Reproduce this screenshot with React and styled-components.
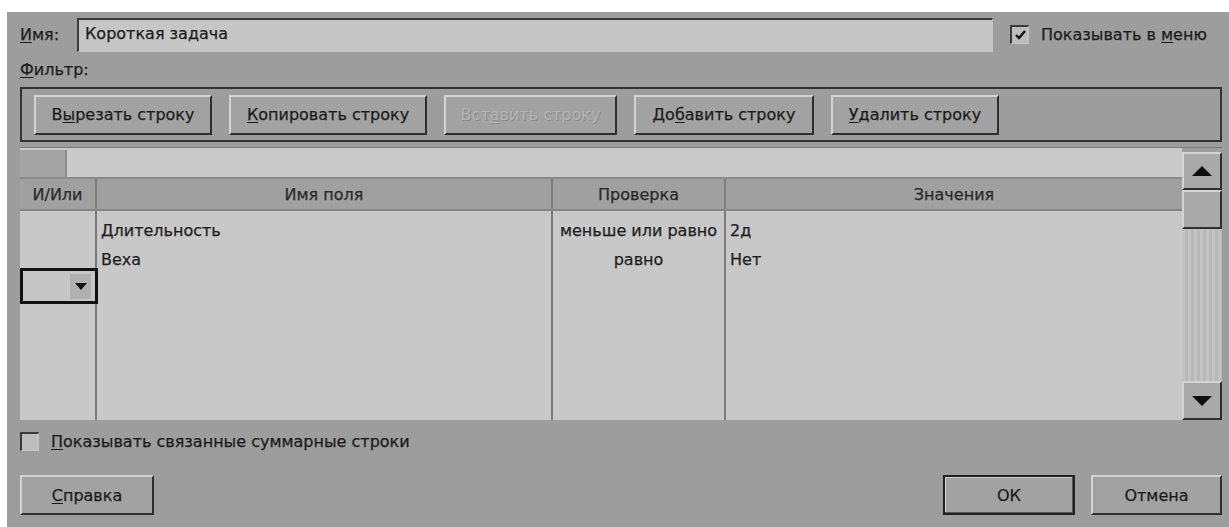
import React from 'react'
import styled, { createGlobalStyle, css } from 'styled-components'

const GlobalStyle = createGlobalStyle`
  html, body {
    margin: 0;
    padding: 0;
    background: #ffffff;
  }
  body {
    font-family: "DejaVu Sans", "Liberation Sans", sans-serif;
    font-size: 16px;
    color: #1c1c1c;
    -webkit-text-stroke: 0.25px currentColor;
  }
`

const raised = css`
  border-top: 2px solid #d4d4d4;
  border-left: 2px solid #d4d4d4;
  border-right: 2px solid #2e2e2e;
  border-bottom: 2px solid #2e2e2e;
`

const sunken = css`
  border-top: 2px solid #3a3a3a;
  border-left: 2px solid #3a3a3a;
  border-right: 1px solid #c4c4c4;
  border-bottom: 1px solid #c4c4c4;
`

const Dialog = styled.div`
  margin: 12px 0 0 7px;
  width: 1222px;
  height: 515px;
  box-sizing: border-box;
  background: #9d9d9d;
  padding: 5px 7px 0 13px;
  display: flex;
  flex-direction: column;
`

const NameRow = styled.div`
  display: flex;
  align-items: center;
  height: 35px;
`

const Label = styled.span`
  white-space: nowrap;
  color: #1e1e1e;
  width: ${p => p.$width || 'auto'};
  flex-shrink: 0;
`

const Key = styled.u`
  text-decoration-thickness: 1px;
  text-underline-offset: 2px;
`

const NameInput = styled.div`
  ${sunken};
  width: 916px;
  height: 34px;
  box-sizing: border-box;
  background: #c6c6c6;
  padding: 3px 0 0 6px;
  line-height: 22px;
`

const CheckLine = styled.label`
  display: flex;
  align-items: center;
  gap: 12px;
  margin-left: ${p => p.$offset || 0}px;
  white-space: nowrap;
`

const Box = styled.span`
  ${sunken};
  width: 19px;
  height: 19px;
  box-sizing: border-box;
  background: #bdbdbd;
  display: flex;
  align-items: center;
  justify-content: center;
  -webkit-text-stroke: 0;
`

const FilterLabel = styled.div`
  height: 20px;
  margin: 8px 0 7px;
  line-height: 20px;
`

const Toolbar = styled.div`
  border: 2px solid #333333;
  height: 55px;
  box-sizing: border-box;
  display: flex;
  align-items: center;
  gap: 17px;
  padding: 0 0 0 12px;
`

const Button = styled.div`
  ${raised};
  background: #a2a2a2;
  height: 40px;
  box-sizing: border-box;
  display: flex;
  align-items: center;
  justify-content: center;
  width: ${p => p.$width}px;
  white-space: nowrap;
  color: ${p => (p.$disabled ? '#b4b4b4' : '#1c1c1c')};
  ${p => p.$disabled && css`
    text-shadow: 1px 1px 0 #8a8a8a;
    -webkit-text-stroke: 0;
  `}
  ${p => p.$default && css`
    border: 2px solid #222222;
    box-shadow: inset -1px -1px 0 #555555, inset 1px 1px 0 #d0d0d0;
  `}
`

const GridFrame = styled.div`
  margin-top: 5px;
  height: 272px;
  display: flex;
  border-top: 1px solid #7a7a7a;
`

const Table = styled.div`
  flex: 1;
  display: flex;
  flex-direction: column;
  background: #c8c8c8;
`

const TopBand = styled.div`
  height: 29px;
  display: flex;
  background: #c9c9c9;
  border-bottom: 2px solid #8c8c8c;
`

const Corner = styled.div`
  width: 45px;
  margin-top: 2px;
  background: #a4a4a4;
  border-right: 2px solid #8e8e8e;
`

const columns = '77px 456px 173px 1fr'

const HeaderRow = styled.div`
  display: grid;
  grid-template-columns: ${columns};
  height: 30px;
  background: #a0a0a0;
  border-bottom: 2px solid #858585;
`

const HeaderCell = styled.div`
  display: flex;
  align-items: center;
  justify-content: center;
  border-right: 2px solid #7e7e7e;
  color: #2a2a2a;
  &:last-child {
    border-right: none;
  }
`

const Body = styled.div`
  flex: 1;
  display: grid;
  grid-template-columns: ${columns};
`

const Column = styled.div`
  border-right: 2px solid #7a7a7a;
  padding-top: 5px;
  display: flex;
  flex-direction: column;
  &:last-child {
    border-right: none;
  }
`

const Cell = styled.div`
  height: 29px;
  line-height: 29px;
  padding: 0 ${p => (p.$center ? 0 : 4)}px;
  text-align: ${p => (p.$center ? 'center' : 'left')};
  white-space: nowrap;
  color: #1e1e1e;
`

const ComboEditor = styled.div`
  margin: -6px -3px 0 0;
  height: 36px;
  box-sizing: border-box;
  border: 3px solid #111111;
  background: #c6c6c6;
  display: flex;
  justify-content: flex-end;
  align-items: center;
  padding-right: 4px;
`

const ComboButton = styled.span`
  width: 21px;
  height: 25px;
  background: #b0b0b0;
  display: flex;
  align-items: center;
  justify-content: center;
`

const ScrollBar = styled.div`
  width: 40px;
  margin-top: 4px;
  display: flex;
  flex-direction: column;
  background: #bcbcbc;
`

const ScrollButton = styled.div`
  ${raised};
  background: #a9a9a9;
  height: ${p => p.$height}px;
  box-sizing: border-box;
  display: flex;
  align-items: center;
  justify-content: center;
`

const Track = styled.div`
  flex: 1;
  background: repeating-linear-gradient(90deg, #c2c2c2 0 3px, #b8b8b8 3px 6px);
`

const SummaryRow = styled.div`
  margin-top: 9px;
  height: 24px;
  display: flex;
  align-items: center;
`

const Footer = styled.div`
  margin-top: 22px;
  display: flex;
  align-items: center;
`

const Spacer = styled.div`
  flex: 1;
`

const Tick = () => (
  <svg width="11" height="10" viewBox="0 0 11 10">
    <path d="M1 5 L4 8 L10 1" fill="none" stroke="#111" strokeWidth="2.4" />
  </svg>
)

const Arrow = ({ down }) => (
  <svg width="22" height="12" viewBox="0 0 22 12">
    <path d={down ? 'M1 1 H21 L11 11 Z' : 'M1 11 H21 L11 1 Z'} fill="#0e0e0e" />
  </svg>
)

const SmallArrow = () => (
  <svg width="12" height="7" viewBox="0 0 12 7">
    <path d="M0 0 H12 L6 7 Z" fill="#111" />
  </svg>
)

const App = () => {
  return (
    <>
      <GlobalStyle />
      <Dialog>
        <NameRow>
          <Label $width="57px"><Key>И</Key>мя:</Label>
          <NameInput>Короткая задача</NameInput>
          <CheckLine $offset={17}>
            <Box><Tick /></Box>
            <span>Показывать в <Key>м</Key>еню</span>
          </CheckLine>
        </NameRow>

        <FilterLabel><Key>Ф</Key>ильтр:</FilterLabel>

        <Toolbar>
          <Button $width={178}>В<Key>ы</Key>резать строку</Button>
          <Button $width={198}><Key>К</Key>опировать строку</Button>
          <Button $width={173} $disabled>Вст<Key>а</Key>вить строку</Button>
          <Button $width={180}>До<Key>б</Key>авить строку</Button>
          <Button $width={168}><Key>У</Key>далить строку</Button>
        </Toolbar>

        <GridFrame>
          <Table>
            <TopBand>
              <Corner />
            </TopBand>
            <HeaderRow>
              <HeaderCell>И/Или</HeaderCell>
              <HeaderCell>Имя поля</HeaderCell>
              <HeaderCell>Проверка</HeaderCell>
              <HeaderCell>Значения</HeaderCell>
            </HeaderRow>
            <Body>
              <Column>
                <Cell />
                <Cell />
                <ComboEditor>
                  <ComboButton><SmallArrow /></ComboButton>
                </ComboEditor>
              </Column>
              <Column>
                <Cell>Длительность</Cell>
                <Cell>Веха</Cell>
              </Column>
              <Column>
                <Cell $center>меньше или равно</Cell>
                <Cell $center>равно</Cell>
              </Column>
              <Column>
                <Cell>2д</Cell>
                <Cell>Нет</Cell>
              </Column>
            </Body>
          </Table>
          <ScrollBar>
            <ScrollButton $height={38}><Arrow /></ScrollButton>
            <ScrollButton $height={39} />
            <Track />
            <ScrollButton $height={39}><Arrow down /></ScrollButton>
          </ScrollBar>
        </GridFrame>

        <SummaryRow>
          <CheckLine>
            <Box />
            <span><Key>П</Key>оказывать связанные суммарные строки</span>
          </CheckLine>
        </SummaryRow>

        <Footer>
          <Button $width={134}><Key>С</Key>правка</Button>
          <Spacer />
          <Button $width={132} $default>ОК</Button>
          <Button $width={131} style={{ marginLeft: 16 }}>Отмена</Button>
        </Footer>
      </Dialog>
    </>
  )
}

export default App
